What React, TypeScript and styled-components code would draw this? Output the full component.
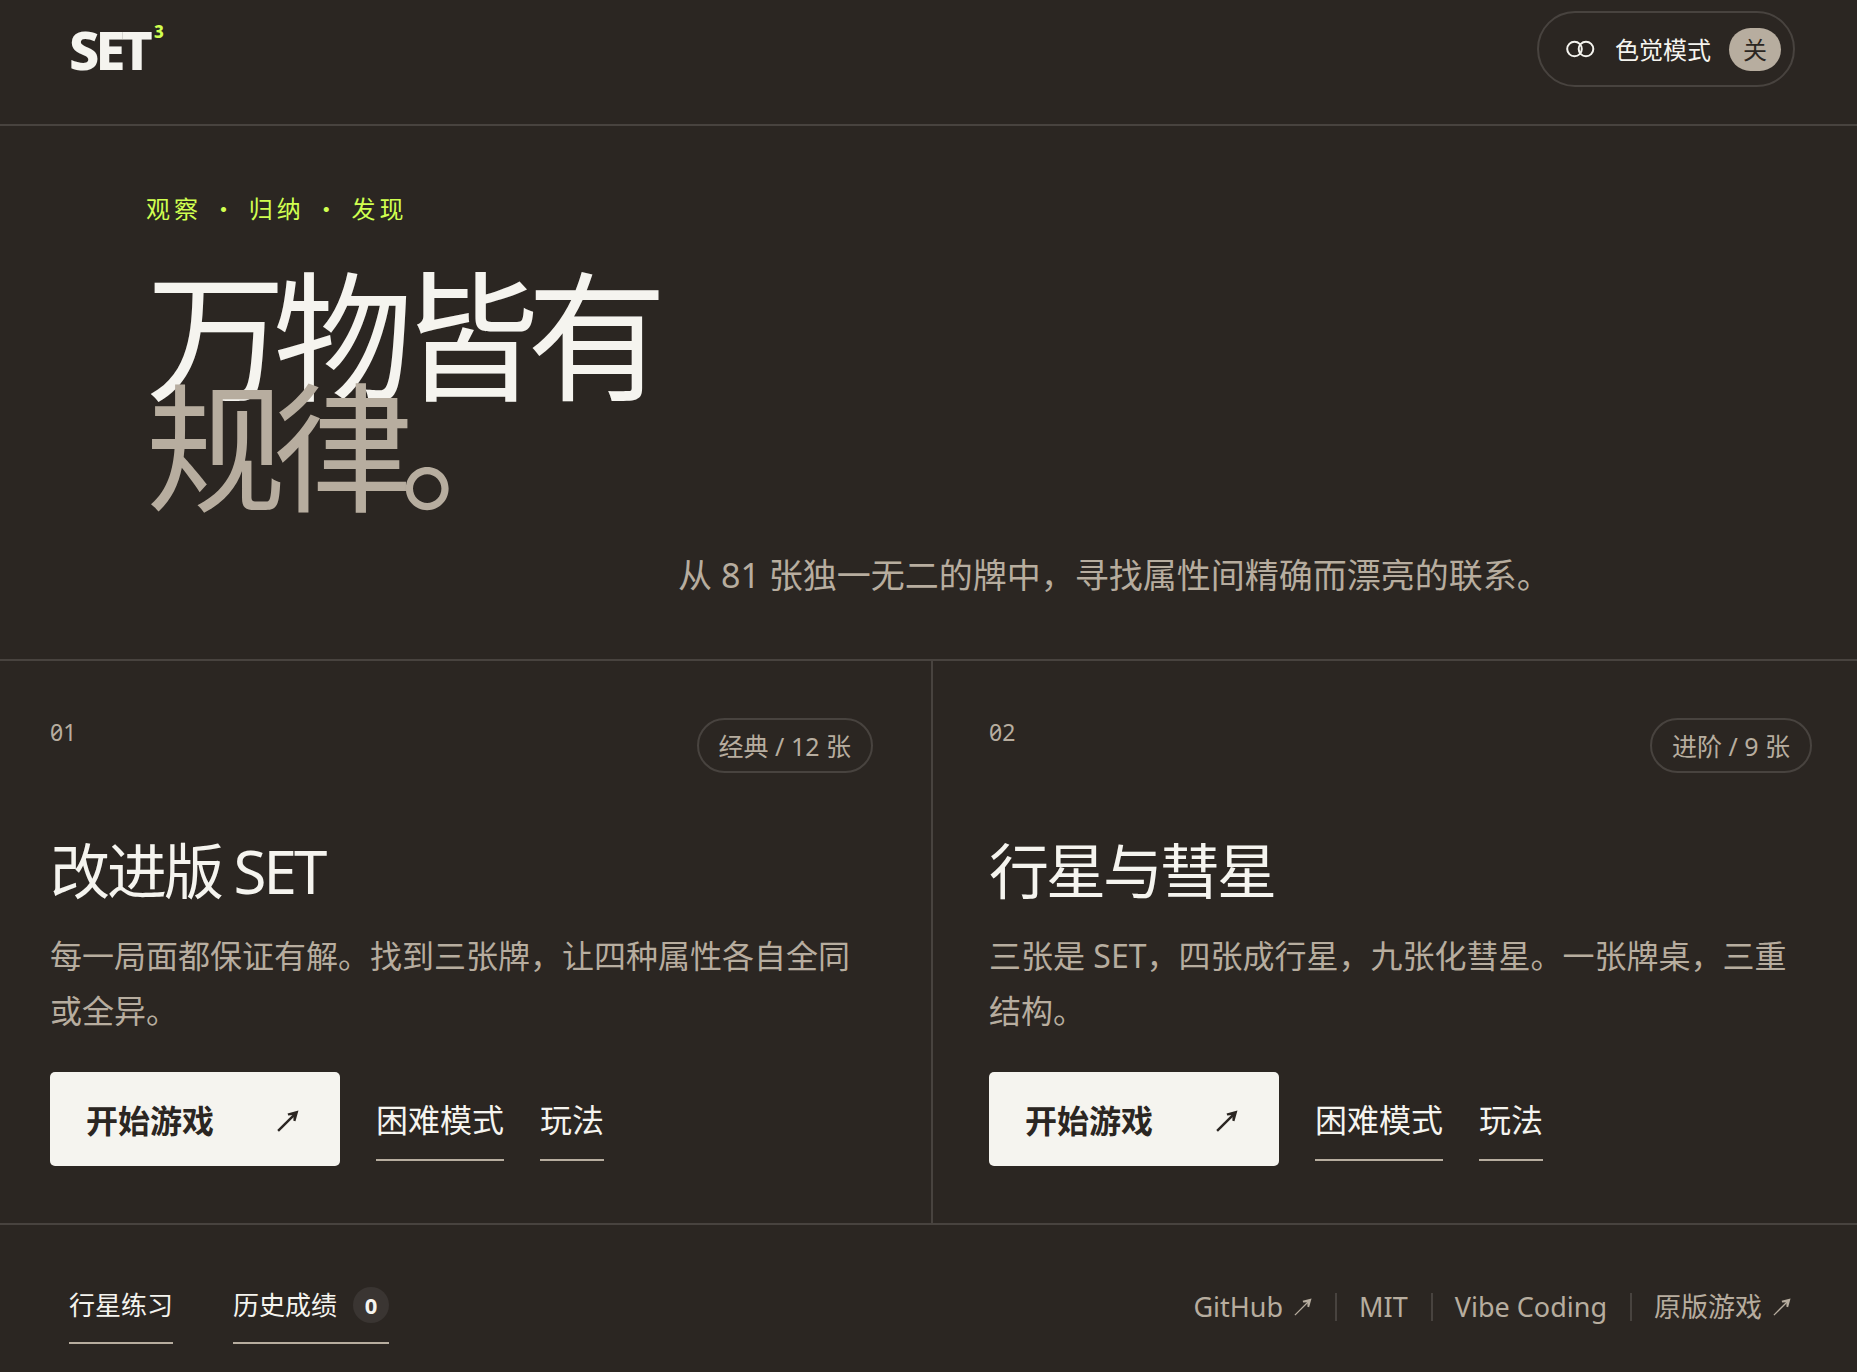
import React, { useState } from "react";
import styled, { createGlobalStyle, css } from "styled-components";

const color = {
  bg: "#2b2622",
  ink: "#f5f4ef",
  muted: "#b7ad9f",
  line: "#48433f",
  chip: "#3a3532",
  accent: "#d0ff50",
};

const GlobalStyle = createGlobalStyle`
  *, *::before, *::after { box-sizing: border-box; }
  body {
    margin: 0;
    background: ${color.bg};
    color: ${color.ink};
    font-family: "Noto Sans", "Noto Sans CJK SC", sans-serif;
    font-size: 24px;
  }
  h1, h2, p { margin: 0; font-weight: 400; }
  button { font: inherit; color: inherit; background: none; border: 0; padding: 0; cursor: pointer; }
  a { color: inherit; text-decoration: none; }
`;

const Page = styled.div`
  min-height: 100vh;
  display: flex;
  flex-direction: column;
`;

const Header = styled.header`
  display: flex;
  align-items: center;
  justify-content: space-between;
  padding: 11px 62px 37px 69px;
  border-bottom: 2px solid ${color.line};
`;

const Logo = styled.a`
  display: flex;
  align-items: flex-start;
  font-size: 54px;
  line-height: 74px;
  font-weight: 800;
  letter-spacing: -4px;
`;

const LogoPower = styled.sup`
  margin: 10px 0 0 5px;
  font-size: 17px;
  line-height: 20px;
  letter-spacing: 0;
  color: ${color.accent};
`;

const VisionToggle = styled.button`
  display: flex;
  align-items: center;
  gap: 18px;
  height: 76px;
  padding: 0 12px 0 27px;
  border: 2px solid ${color.line};
  border-radius: 38px;
  line-height: 36px;
`;

const ToggleLabel = styled.span`
  padding-top: 2px;
`;

const ToggleState = styled.span`
  width: 52px;
  height: 43px;
  border-radius: 22px;
  background: ${color.muted};
  color: ${color.bg};
  line-height: 43px;
  text-align: center;
`;

const Hero = styled.section`
  padding: 64px 146px 57px;
  border-bottom: 2px solid ${color.line};
`;

const Kicker = styled.p`
  font-family: "Noto Sans CJK SC", sans-serif;
  line-height: 36px;
  letter-spacing: 4px;
  color: ${color.accent};
`;

const Headline = styled.h1`
  margin-top: 54px;
  font-size: 140px;
  line-height: 111px;
  letter-spacing: -13px;
`;

const HeadlineEcho = styled.span`
  display: block;
  color: ${color.muted};
`;

const Lead = styled.p`
  margin: 46px 0 0 34%;
  font-size: 34px;
  line-height: 54px;
  color: ${color.muted};
`;

const Modes = styled.main`
  display: grid;
  grid-template-columns: 1fr 1fr;
  padding: 0 45px 0 50px;
  border-bottom: 2px solid ${color.line};
`;

const Mode = styled.article`
  padding: 57px 0;

  &:first-child {
    padding-right: 58px;
  }

  &:last-child {
    padding-left: 56px;
    border-left: 2px solid ${color.line};
  }
`;

const ModeTop = styled.div`
  display: flex;
  align-items: flex-start;
  justify-content: space-between;
`;

const ModeIndex = styled.span`
  font-feature-settings: "zero";
  font-size: 23px;
  line-height: 28px;
  color: ${color.muted};
`;

const ModeTag = styled.span`
  padding: 8px 20px 7px;
  border: 2px solid ${color.line};
  border-radius: 28px;
  font-size: 25px;
  line-height: 36px;
  color: ${color.muted};
`;

const ModeTitle = styled.h2`
  margin-top: 65px;
  font-size: 60px;
  line-height: 66px;
  letter-spacing: -3px;
`;

const ModeText = styled.p`
  margin-top: 24px;
  font-size: 32px;
  line-height: 55px;
  color: ${color.muted};
`;

const Actions = styled.div`
  display: flex;
  align-items: center;
  gap: 36px;
  margin-top: 34px;
  font-size: 32px;
  line-height: 48px;
`;

const StartButton = styled.button`
  display: flex;
  align-items: center;
  justify-content: space-between;
  width: 290px;
  height: 94px;
  padding: 3px 41px 0 36px;
  border-radius: 5px;
  background: ${color.ink};
  color: ${color.bg};
  font-weight: 700;
`;

const underlined = css`
  border-bottom: 2px solid ${color.muted};
`;

const ActionLink = styled.button`
  ${underlined}
  padding: 19px 0 15px;
`;

const Footer = styled.footer`
  display: flex;
  align-items: flex-start;
  justify-content: space-between;
  padding: 57px 66px 27px 69px;
  line-height: 46px;
`;

const FooterNav = styled.nav`
  display: flex;
  gap: 60px;
  font-size: 26px;
`;

const FooterButton = styled.button`
  ${underlined}
  display: flex;
  align-items: center;
  gap: 16px;
  padding-bottom: 14px;
`;

const Count = styled.span`
  width: 36px;
  height: 36px;
  border-radius: 18px;
  background: ${color.chip};
  font-size: 22px;
  font-weight: 700;
  line-height: 36px;
  text-align: center;
`;

const Credits = styled.nav`
  display: flex;
  align-items: center;
  padding-top: 2px;
  font-size: 27px;
  color: ${color.muted};
`;

const Credit = styled.a`
  display: flex;
  align-items: center;
  gap: 11px;

  & + &::before {
    content: "";
    width: 2px;
    height: 28px;
    margin: 0 11px 0 23px;
    background: ${color.line};
  }
`;

function ArrowIcon({ size, weight }: { size: number; weight: number }) {
  return (
    <svg width={size} height={size} viewBox="0 0 20 20" fill="none" aria-hidden="true">
      <path d="M1 19 17 3" stroke="currentColor" strokeWidth={weight} />
      <path d="M19.5.5 9.6 3.1 10.2 4.9 15 4.6 14.9 9.8 16.8 10.3Z" fill="currentColor" />
    </svg>
  );
}

function RingsIcon() {
  return (
    <svg width="31" height="18" viewBox="0 0 31 18" fill="none" stroke="currentColor" strokeWidth="2" aria-hidden="true">
      <circle cx="8.5" cy="9" r="7.3" />
      <circle cx="20" cy="9" r="7.3" />
    </svg>
  );
}

const modes = [
  {
    index: "01",
    tag: "经典 / 12 张",
    title: "改进版 SET",
    text: "每一局面都保证有解。找到三张牌，让四种属性各自全同或全异。",
  },
  {
    index: "02",
    tag: "进阶 / 9 张",
    title: "行星与彗星",
    text: "三张是 SET，四张成行星，九张化彗星。一张牌桌，三重结构。",
  },
];

const credits = [
  { label: "GitHub", external: true },
  { label: "MIT", external: false },
  { label: "Vibe Coding", external: false },
  { label: "原版游戏", external: true },
];

export default function App() {
  const [assist, setAssist] = useState(false);

  return (
    <Page lang="zh-CN">
      <GlobalStyle />
      <Header>
        <Logo href="#">
          SET<LogoPower>3</LogoPower>
        </Logo>
        <VisionToggle type="button" aria-pressed={assist} onClick={() => setAssist(!assist)}>
          <RingsIcon />
          <ToggleLabel>色觉模式</ToggleLabel>
          <ToggleState>{assist ? "开" : "关"}</ToggleState>
        </VisionToggle>
      </Header>

      <Hero>
        <Kicker>观察 · 归纳 · 发现</Kicker>
        <Headline>
          万物皆有
          <HeadlineEcho>规律。</HeadlineEcho>
        </Headline>
        <Lead>从 81 张独一无二的牌中，寻找属性间精确而漂亮的联系。</Lead>
      </Hero>

      <Modes>
        {modes.map((mode) => (
          <Mode key={mode.index}>
            <ModeTop>
              <ModeIndex>{mode.index}</ModeIndex>
              <ModeTag>{mode.tag}</ModeTag>
            </ModeTop>
            <ModeTitle>{mode.title}</ModeTitle>
            <ModeText>{mode.text}</ModeText>
            <Actions>
              <StartButton type="button">
                开始游戏
                <ArrowIcon size={22} weight={2.2} />
              </StartButton>
              <ActionLink type="button">困难模式</ActionLink>
              <ActionLink type="button">玩法</ActionLink>
            </Actions>
          </Mode>
        ))}
      </Modes>

      <Footer>
        <FooterNav>
          <FooterButton type="button">行星练习</FooterButton>
          <FooterButton type="button">
            历史成绩<Count>0</Count>
          </FooterButton>
        </FooterNav>
        <Credits>
          {credits.map((credit) => (
            <Credit key={credit.label} href="#">
              {credit.label}
              {credit.external && <ArrowIcon size={18} weight={1.4} />}
            </Credit>
          ))}
        </Credits>
      </Footer>
    </Page>
  );
}
